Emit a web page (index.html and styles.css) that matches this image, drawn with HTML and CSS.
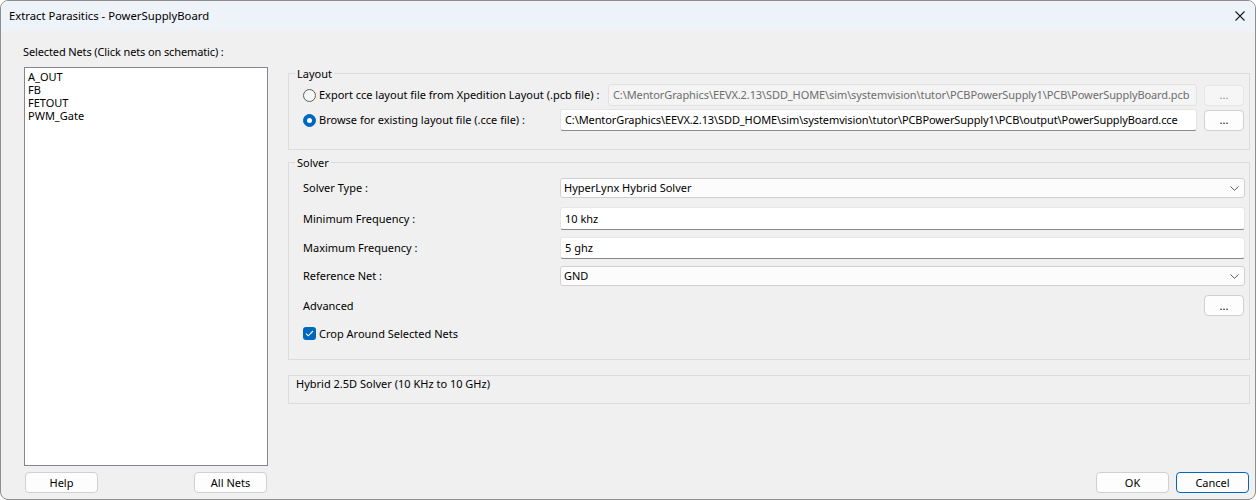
FILE: index.html
```html
<!DOCTYPE html>
<html>
<head>
<meta charset="utf-8">
<link rel="stylesheet" href="styles.css">
</head>
<body>
<div class="window">
  <div class="titlebar">
    <span class="title">Extract Parasitics - PowerSupplyBoard</span>
    <svg class="close" width="10" height="10" viewBox="0 0 10 10"><path d="M0.5 0.5L9.5 9.5M9.5 0.5L0.5 9.5" stroke="#1b1b1b" stroke-width="1.1" fill="none"/></svg>
  </div>
  <div class="content">
    <div class="left">
      <div class="nets-label">Selected Nets (Click nets on schematic) :</div>
      <div class="listbox">
        <div class="item">A_OUT</div>
        <div class="item">FB</div>
        <div class="item">FETOUT</div>
        <div class="item">PWM_Gate</div>
      </div>
      <div class="left-buttons">
        <div class="btn">Help</div>
        <div class="btn">All Nets</div>
      </div>
    </div>
    <div class="right">
      <div class="group layout-group">
        <div class="legend">Layout</div>
        <div class="lrow lrow1">
          <span class="radio"></span>
          <span class="rlabel rlabel1">Export cce layout file from Xpedition Layout (.pcb file) :</span>
          <div class="field disabled">C:\MentorGraphics\EEVX.2.13\SDD_HOME\sim\systemvision\tutor\PCBPowerSupply1\PCB\PowerSupplyBoard.pcb</div>
          <div class="btn dots disabled-btn">...</div>
        </div>
        <div class="lrow lrow2">
          <span class="radio checked"><span class="dot"></span></span>
          <span class="rlabel rlabel2">Browse for existing layout file (.cce file) :</span>
          <div class="field">C:\MentorGraphics\EEVX.2.13\SDD_HOME\sim\systemvision\tutor\PCBPowerSupply1\PCB\output\PowerSupplyBoard.cce</div>
          <div class="btn dots">...</div>
        </div>
      </div>
      <div class="group solver-group">
        <div class="legend">Solver</div>
        <div class="srow srow1">
          <span class="slabel">Solver Type :</span>
          <div class="select">HyperLynx Hybrid Solver<svg class="chev" width="9" height="5" viewBox="0 0 9 5"><path d="M0.5 0.5L4.5 4.3L8.5 0.5" stroke="#5c5c5c" stroke-width="1" fill="none"/></svg></div>
        </div>
        <div class="srow srow2">
          <span class="slabel">Minimum Frequency :</span>
          <div class="tinput">10 khz</div>
        </div>
        <div class="srow srow3">
          <span class="slabel">Maximum Frequency :</span>
          <div class="tinput">5 ghz</div>
        </div>
        <div class="srow srow4">
          <span class="slabel">Reference Net :</span>
          <div class="select">GND<svg class="chev" width="9" height="5" viewBox="0 0 9 5"><path d="M0.5 0.5L4.5 4.3L8.5 0.5" stroke="#5c5c5c" stroke-width="1" fill="none"/></svg></div>
        </div>
        <div class="srow srow5">
          <span class="slabel">Advanced</span>
          <div class="btn dots adv">...</div>
        </div>
        <div class="srow srow6">
          <span class="checkbox"><svg width="9" height="7" viewBox="0 0 9 7"><path d="M1 3.6L3.3 5.8L8 1" stroke="#ffffff" stroke-width="1.1" fill="none"/></svg></span>
          <span class="clabel">Crop Around Selected Nets</span>
        </div>
      </div>
      <div class="info">Hybrid 2.5D Solver (10 KHz to 10 GHz)</div>
      <div class="spacer"></div>
      <div class="dialog-buttons">
        <div class="btn">OK</div>
        <div class="btn primary">Cancel</div>
      </div>
    </div>
  </div>
</div>
</body>
</html>
```
FILE: styles.css
```css
* { box-sizing: border-box; }
html, body { margin: 0; padding: 0; }
body {
  width: 1256px;
  height: 500px;
  background: #ffffff;
  font-family: "Noto Sans", "Open Sans", sans-serif;
  font-size: 11px;
  color: #000;
}
.window {
  width: 1256px;
  height: 500px;
  border: 1px solid #8e8e8e;
  border-radius: 8px;
  overflow: hidden;
  background: #f0f0f0;
  display: flex;
  flex-direction: column;
}
.titlebar {
  flex: none;
  height: 30px;
  background: #eef3f9;
  display: flex;
  align-items: center;
  padding-left: 8px;
  padding-right: 10px;
  font-size: 11.3px;
}
.title { flex: 1; line-height: 16px; }
.close { display: block; }
.content {
  flex: 1;
  display: flex;
  gap: 20px;
  padding: 0 5px 6px 23px;
}
.left {
  width: 244px;
  display: flex;
  flex-direction: column;
}
.nets-label { margin-top: 13px; line-height: 16px; margin-left: -1px; letter-spacing: -0.12px; }
.listbox {
  flex: 1;
  margin-top: 7px;
  margin-bottom: 6px;
  background: #fff;
  border: 1px solid #828790;
  padding: 2px 0 0 3px;
}
.item { line-height: 13px; height: 13px; }
.left-buttons {
  display: flex;
  justify-content: space-between;
  padding: 0 1px 0 1px;
}
.btn {
  width: 73px;
  height: 21px;
  border: 1px solid #d0d0d0;
  border-radius: 4px;
  background: #fdfdfd;
  display: flex;
  align-items: center;
  justify-content: center;
  line-height: 16px;
}
.btn.primary { border-color: #0067c0; }
.right {
  width: 962px;
  display: flex;
  flex-direction: column;
}
.group {
  border: 1px solid #dcdcdc;
}
.legend {
  width: fit-content;
  background: #f0f0f0;
  line-height: 16px;
  height: 16px;
  margin-top: -8px;
  margin-left: -8px;
  padding: 0 2px;
}
.layout-group {
  margin-top: 42px;
  height: 77px;
  padding: 0 5px 0 14px;
}
.lrow {
  display: flex;
  align-items: center;
  height: 22px;
}
.lrow1 { margin-top: 2px; }
.lrow2 { margin-top: 3px; }
.radio {
  flex: none;
  width: 13px;
  height: 13px;
  border-radius: 50%;
  border: 1px solid #5d5d5d;
  background: #f6f6f6;
  margin-right: 3px;
  display: flex;
  align-items: center;
  justify-content: center;
}
.radio.checked { background: #0067c0; border-color: #0067c0; }
.radio .dot { width: 5px; height: 5px; border-radius: 50%; background: #fff; }
.rlabel { flex: none; white-space: nowrap; line-height: 16px; }
.rlabel1 { width: 289px; }
.rlabel2 { width: 241px; }
.field {
  flex: 1;
  height: 22px;
  margin-right: 7px;
  background: #fff;
  border: 1px solid #e4e4e4;
  border-bottom-color: #8a8a8a;
  border-radius: 3px;
  padding: 0 4px;
  line-height: 20px;
  white-space: nowrap;
  overflow: hidden;
  letter-spacing: -0.1px;
}
.field.disabled {
  background: #f4f4f4;
  border-color: #e2e2e2;
  color: #6d6d6d;
}
.dots { width: 40px; flex: none; }
.disabled-btn { background: #f6f6f6; border-color: #e6e6e6; color: #8a8a8a; }
.solver-group {
  margin-top: 12px;
  height: 198px;
  padding: 0 4px 0 14px;
}
.srow { display: flex; align-items: center; }
.slabel { width: 257px; flex: none; line-height: 16px; }
.srow1 { margin-top: 7px; height: 20px; }
.srow2 { margin-top: 9px; height: 23px; }
.srow3 { margin-top: 7px; height: 22px; }
.srow4 { margin-top: 7px; height: 20px; }
.srow5 { margin-top: 9px; height: 21px; justify-content: space-between; }
.srow6 { margin-top: 11px; height: 13px; }
.select {
  flex: 1;
  height: 20px;
  background: #fcfcfc;
  border: 1px solid #d0d0d0;
  border-radius: 3px;
  padding: 0 5px 0 3px;
  display: flex;
  align-items: center;
  justify-content: space-between;
  line-height: 16px;
}
.chev { display: block; }
.tinput {
  flex: 1;
  height: 100%;
  background: #fff;
  border: 1px solid #e6e6e6;
  border-bottom-color: #878787;
  border-radius: 3px;
  padding: 0 4px;
  display: flex;
  align-items: center;
  line-height: 16px;
}
.adv { margin-right: 1px; }
.checkbox {
  width: 13px;
  height: 13px;
  border-radius: 3px;
  background: #0067c0;
  display: flex;
  align-items: center;
  justify-content: center;
  margin-right: 3px;
}
.clabel { line-height: 16px; }
.info {
  margin-top: 15px;
  height: 29px;
  border: 1px solid #dcdcdc;
  padding: 0 7px;
  line-height: 16px;
}
.spacer { flex: 1; }
.dialog-buttons {
  display: flex;
  justify-content: flex-end;
  gap: 7px;
  padding-right: 1px;
}
```
